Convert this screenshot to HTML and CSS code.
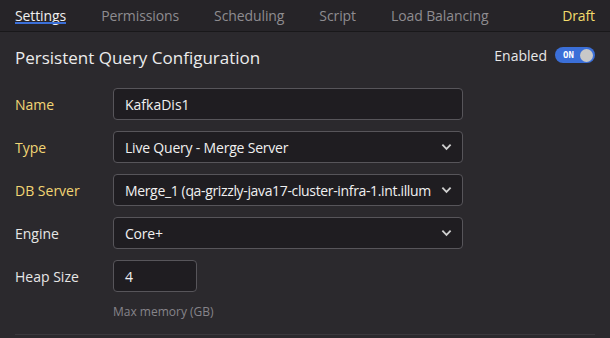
FILE: index.html
```html
<!DOCTYPE html>
<html lang="en">
<head>
    <meta charset="UTF-8">
    <meta name="viewport" content="width=device-width, initial-scale=1.0">
    <title>Persistent Query Configuration</title>
    <link rel="stylesheet" href="styles.css">
</head>
<body>
    <nav class="tabs">
        <a class="tab active">Settings</a>
        <a class="tab">Permissions</a>
        <a class="tab">Scheduling</a>
        <a class="tab">Script</a>
        <a class="tab">Load Balancing</a>
        <span class="status">Draft</span>
    </nav>
    <main class="panel">
        <div class="panel-head">
            <h2>Persistent Query Configuration</h2>
            <div class="enabled">
                <span>Enabled</span>
                <span class="toggle"><span class="toggle-text">ON</span><span class="knob"></span></span>
            </div>
        </div>
        <div class="row">
            <label class="label required">Name</label>
            <div class="field">KafkaDis1</div>
        </div>
        <div class="row">
            <label class="label required">Type</label>
            <div class="field select"><span class="value">Live Query - Merge Server</span><svg class="chev" viewBox="0 0 12 8"><path d="M1.5 1.5 6 6l4.5-4.5" fill="none" stroke="#cfcfcf" stroke-width="2"/></svg></div>
        </div>
        <div class="row">
            <label class="label required">DB Server</label>
            <div class="field select"><span class="value long">Merge_1 (qa-grizzly-java17-cluster-infra-1.int.illum</span><svg class="chev" viewBox="0 0 12 8"><path d="M1.5 1.5 6 6l4.5-4.5" fill="none" stroke="#cfcfcf" stroke-width="2"/></svg></div>
        </div>
        <div class="row">
            <label class="label">Engine</label>
            <div class="field select"><span class="value">Core+</span><svg class="chev" viewBox="0 0 12 8"><path d="M1.5 1.5 6 6l4.5-4.5" fill="none" stroke="#cfcfcf" stroke-width="2"/></svg></div>
        </div>
        <div class="row">
            <label class="label">Heap Size</label>
            <div class="field small">4</div>
        </div>
        <p class="hint">Max memory (GB)</p>
        <hr class="divider">
    </main>
</body>
</html>
```
FILE: styles.css
```css
body {
    margin: 0;
    padding: 0;
    background-color: #2b292d;
    color: #e8e8e8;
    font-family: "Open Sans", "Noto Sans", sans-serif;
    font-size: 14px;
    overflow: hidden;
}
.tabs {
    display: flex;
    align-items: center;
    height: 31px;
    padding: 0 15px;
    background-color: #262428;
    border-bottom: 1px solid #19181a;
    font-size: 14px;
    letter-spacing: -0.1px;
}
.tab {
    color: #8e8c90;
    margin-right: 35px;
    height: 31px;
    line-height: 31px;
    box-sizing: border-box;
    position: relative;
}
.tab.active {
    color: #f0f0f0;
}
.tab.active::after {
    content: "";
    position: absolute;
    left: 0;
    right: 0;
    bottom: 7px;
    height: 2px;
    background-color: #3b6fd8;
}
.status {
    margin-left: auto;
    color: #f4dc6c;
}
.panel {
    padding: 0 15px;
}
.panel-head {
    display: flex;
    justify-content: space-between;
    align-items: center;
    height: 50px;
    margin-bottom: 6px;
}
.panel-head h2 {
    margin: 0;
    font-size: 17px;
    font-weight: 400;
    color: #ececec;
}
.enabled {
    display: flex;
    align-items: center;
    gap: 8px;
    font-size: 14px;
    margin-top: -4px;
}
.toggle {
    display: flex;
    align-items: center;
    justify-content: space-between;
    width: 40px;
    height: 16px;
    box-sizing: border-box;
    padding: 0 2px 0 8px;
    border-radius: 8px;
    background-color: #3b6fd8;
}
.toggle-text {
    font-family: "DejaVu Sans Mono", monospace;
    font-size: 9px;
    font-weight: bold;
    color: #fff;
}
.knob {
    width: 13px;
    height: 13px;
    border-radius: 50%;
    background-color: #c8c8c8;
}
.row {
    display: flex;
    align-items: center;
    margin-bottom: 11px;
}
.label {
    width: 98px;
    color: #e6e6e6;
}
.label.required {
    color: #f2d574;
}
.field {
    display: flex;
    align-items: center;
    width: 350px;
    height: 32px;
    box-sizing: border-box;
    padding: 0 11px;
    background-color: #1f1d21;
    border: 1px solid #57555a;
    border-radius: 4px;
    color: #f0f0f0;
    white-space: nowrap;
}
.field.small {
    width: 84px;
}
.select {
    padding-right: 10px;
}
.value {
    flex: 1;
    letter-spacing: -0.2px;
}
.value.long {
    letter-spacing: -0.35px;
}
.chev {
    width: 11px;
    height: 8px;
    margin-left: 4px;
    flex: none;
}
.hint {
    margin: 7px 0 0 98px;
    font-size: 12px;
    color: #86848a;
}
.divider {
    border: none;
    border-top: 1px solid #3a383c;
    margin: 14px 0 0 0;
}
```
